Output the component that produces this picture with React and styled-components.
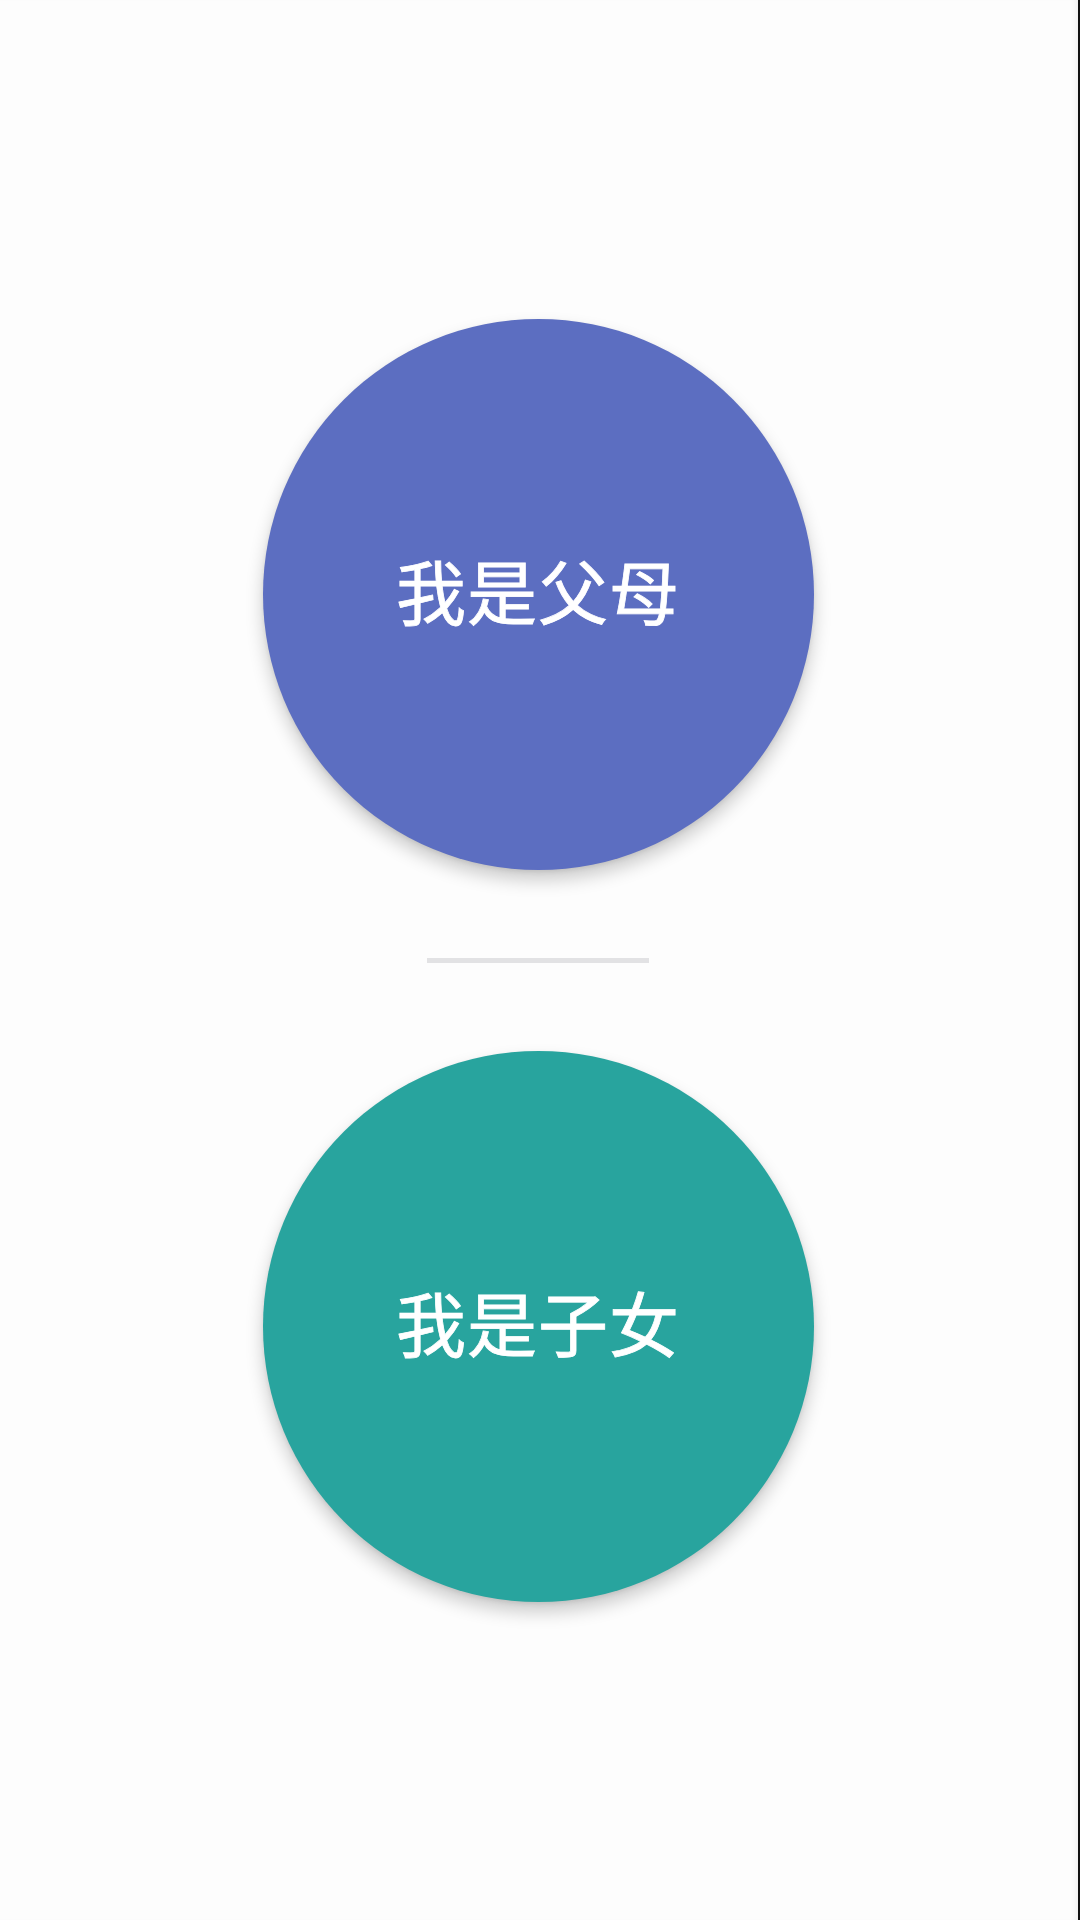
import React from "react";
import styled, { createGlobalStyle } from "styled-components";

const GlobalStyle = createGlobalStyle`
	html, body {
		margin: 0;
		padding: 0;
		background: #fdfdfd;
	}
	body {
		font-family: "Noto Sans CJK SC", "Noto Sans", sans-serif;
	}
`;

const roles = [
	{ label: "我是父母", color: "#5c6ec1" },
	{ label: "我是子女", color: "#28a49e" },
];

const App = () => {
	return (
		<>
			<GlobalStyle />
			<Page>
				<RoleButton $color={roles[0].color}>{roles[0].label}</RoleButton>
				<Divider />
				<RoleButton $color={roles[1].color}>{roles[1].label}</RoleButton>
			</Page>
		</>
	);
};

export default App;

const Page = styled.div`
	box-sizing: border-box;
	width: 1080px;
	height: 1920px;
	display: flex;
	flex-direction: column;
	align-items: center;
	justify-content: center;
	gap: 88px;
	padding-right: 2px;
	background: #fdfdfd;
	border-right: 2px solid #111;
	box-shadow: inset -6px 0 6px -4px rgba(0, 0, 0, 0.06);
`;

const RoleButton = styled.button`
	width: 551px;
	height: 551px;
	border: none;
	border-radius: 50%;
	background: ${(p) => p.$color};
	color: #fff;
	font-family: "Noto Sans CJK SC", "Noto Sans", sans-serif;
	font-size: 70px;
	font-weight: 400;
	-webkit-text-stroke: 0.8px #fff;
	letter-spacing: 1px;
	box-shadow: 0 10px 18px rgba(0, 0, 0, 0.2), 0 2px 4px rgba(0, 0, 0, 0.08);
	cursor: pointer;
	padding: 0 0 10px;
`;

const Divider = styled.div`
	width: 222px;
	height: 5px;
	background: #e2e2e4;
`;
